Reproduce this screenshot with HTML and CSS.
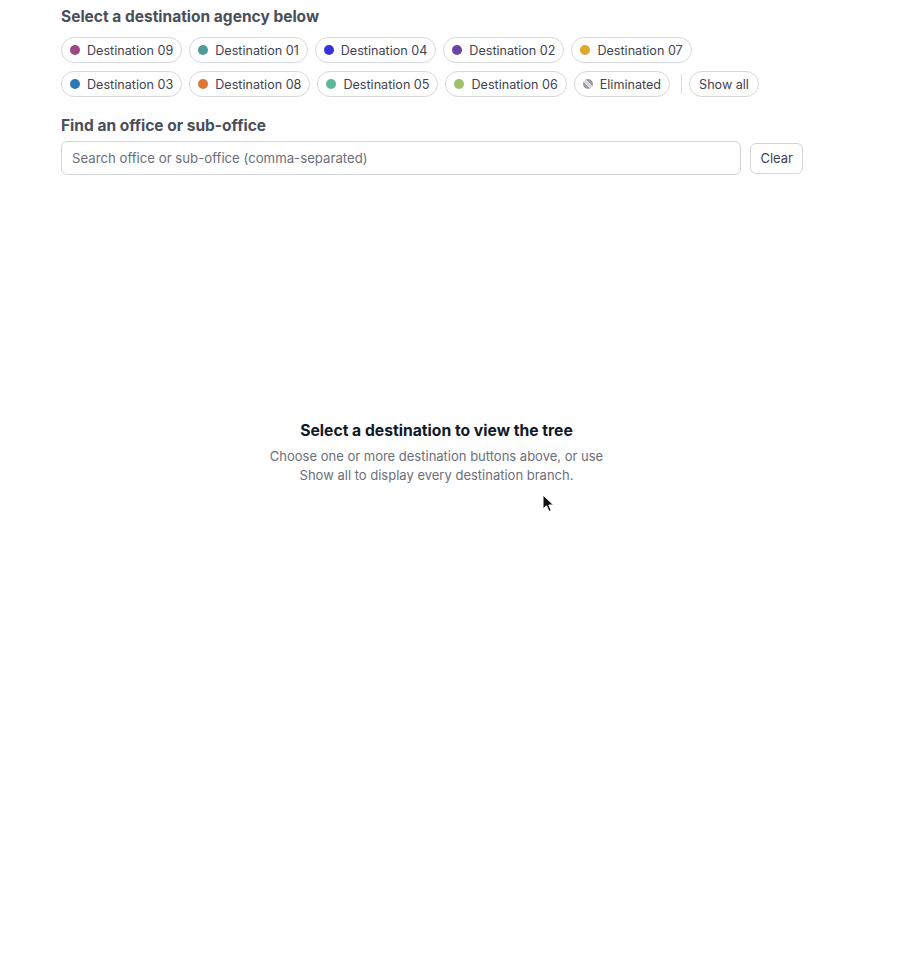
FILE: index.html
```html
<!DOCTYPE html>
<html lang="en">
<head>
<meta charset="utf-8">
<title>Destination tree</title>
<link rel="stylesheet" href="styles.css">
</head>
<body>
<main class="page">
  <section class="picker">
    <h2 class="section-title">Select a destination agency below</h2>
    <div class="chip-rows">
      <div class="chip-row">
        <button class="chip"><span class="dot d09"></span>Destination 09</button>
        <button class="chip"><span class="dot d01"></span>Destination 01</button>
        <button class="chip"><span class="dot d04"></span>Destination 04</button>
        <button class="chip"><span class="dot d02"></span>Destination 02</button>
        <button class="chip"><span class="dot d07"></span>Destination 07</button>
      </div>
      <div class="chip-row">
        <button class="chip"><span class="dot d03"></span>Destination 03</button>
        <button class="chip"><span class="dot d08"></span>Destination 08</button>
        <button class="chip"><span class="dot d05"></span>Destination 05</button>
        <button class="chip"><span class="dot d06"></span>Destination 06</button>
        <button class="chip"><span class="dot elim"></span>Eliminated</button>
        <span class="divider"></span>
        <button class="chip plain">Show all</button>
      </div>
    </div>
  </section>

  <section class="finder">
    <h2 class="section-title">Find an office or sub-office</h2>
    <div class="search-row">
      <input class="search" type="text" placeholder="Search office or sub-office (comma-separated)">
      <button class="clear">Clear</button>
    </div>
  </section>

  <section class="tree-area">
    <div class="empty">
      <h3 class="empty-title">Select a destination to view the tree</h3>
      <p class="empty-text">Choose one or more destination buttons above, or use<br>Show all to display every destination branch.</p>
    </div>
    <svg class="cursor" width="14" height="20" viewBox="0 0 14 20" aria-hidden="true">
      <path d="M1 1 L1 15 L4.5 11.8 L7 17.5 L9.2 16.5 L6.8 11 L11.5 11 Z" fill="#111" stroke="#fff" stroke-width="1"/>
    </svg>
  </section>
</main>
</body>
</html>
```

FILE: styles.css
```css
* { box-sizing: border-box; }

html, body {
  margin: 0;
  padding: 0;
  background: #ffffff;
}

body {
  font-family: Inter, "Noto Sans", "Liberation Sans", sans-serif;
  color: #3f4350;
}

.page {
  width: 751px;
  margin-left: 61px;
  padding-top: 7px;
}

.section-title {
  margin: 0;
  font-size: 15.5px;
  line-height: 20px;
  font-weight: 700;
  color: #4a4e5a;
}

.chip-rows {
  margin-top: 10px;
  display: flex;
  flex-direction: column;
  gap: 8px;
}

.chip-row {
  display: flex;
  align-items: center;
  gap: 7px;
}

.chip {
  display: inline-flex;
  align-items: center;
  gap: 7px;
  height: 26px;
  padding: 0 8px 0 8px;
  border: 1px solid #d6d8dc;
  border-radius: 13px;
  background: #ffffff;
  font-family: inherit;
  font-size: 12.6px;
  color: #3f4350;
  cursor: pointer;
}

.chip.plain {
  padding: 0 9px;
}

.dot {
  width: 10px;
  height: 10px;
  border-radius: 50%;
  flex: none;
}

.d09 { background: #9c4686; }
.d01 { background: #4e9b98; }
.d04 { background: #3434d6; }
.d02 { background: #6b43a6; }
.d07 { background: #e0a82e; }
.d03 { background: #2d78b3; }
.d08 { background: #dc7836; }
.d05 { background: #5db898; }
.d06 { background: #9fbf68; }
.elim {
  background: linear-gradient(45deg, #9a9ca2 0 38%, #d8d9dc 38% 62%, #9a9ca2 62% 100%);
}

.divider {
  width: 1px;
  height: 20px;
  background: #d9dbdf;
  margin: 0 0 0 4px;
}

.finder {
  margin-top: 19px;
}

.search-row {
  margin-top: 5px;
  display: flex;
  align-items: center;
  gap: 9px;
  width: 742px;
}

.search {
  flex: 1;
  height: 34px;
  padding: 0 10px;
  border: 1px solid #d3d5da;
  border-radius: 6px;
  font-family: inherit;
  font-size: 13.2px;
  color: #3f4350;
  outline: none;
}

.search::placeholder {
  color: #6b6f7a;
}

.clear {
  height: 31px;
  padding: 0 9px;
  border: 1px solid #d3d5da;
  border-radius: 6px;
  background: #ffffff;
  font-family: inherit;
  font-size: 13px;
  color: #3f4350;
}

.tree-area {
  position: relative;
  padding-top: 246px;
  min-height: 780px;
}

.empty {
  text-align: center;
}

.empty-title {
  margin: 0;
  font-size: 15.7px;
  line-height: 20px;
  font-weight: 700;
  color: #111827;
}

.empty-text {
  margin: 6px 0 0;
  font-size: 13px;
  line-height: 19px;
  color: #6b6f7a;
}

.cursor {
  position: absolute;
  left: 481px;
  top: 319px;
}
```
